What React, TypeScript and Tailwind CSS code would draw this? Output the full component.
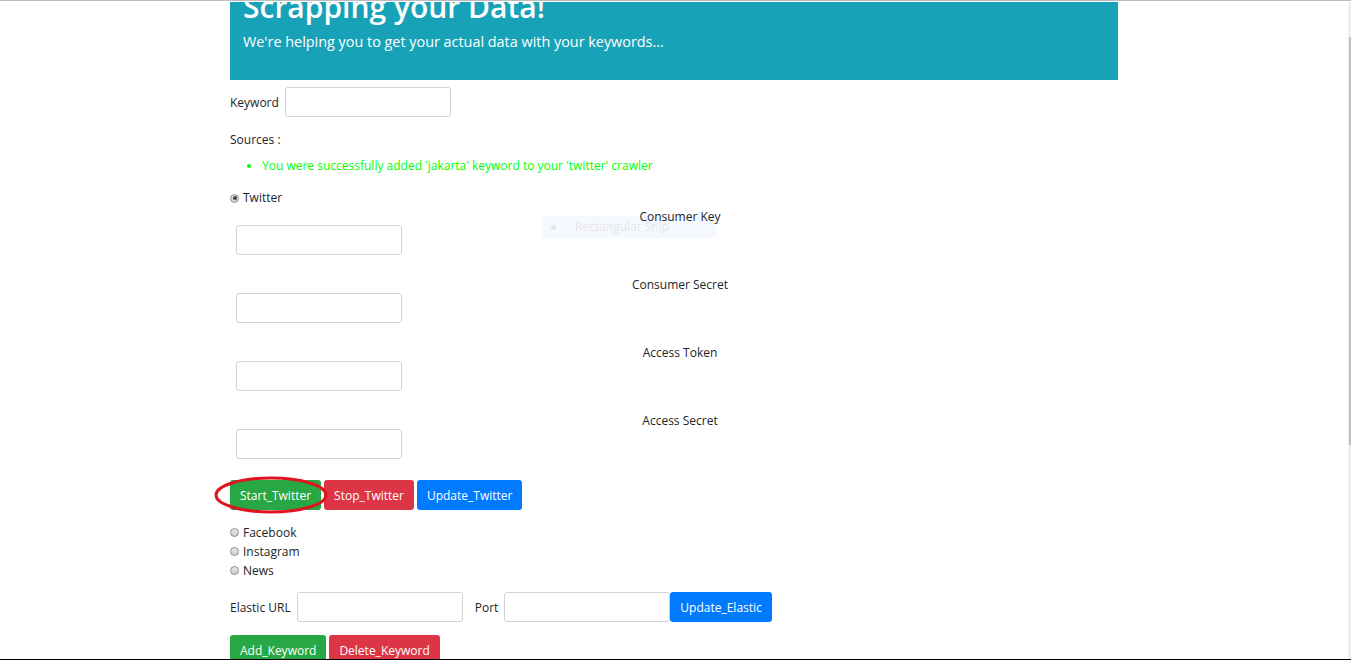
import React from "react";

const font = { fontFamily: '"Open Sans", "Noto Sans", sans-serif' };

const Radio = ({ checked = false }: { checked?: boolean }) => (
  <span className="inline-flex h-[9px] w-[9px] items-center justify-center rounded-full border border-[#8f8f8f] bg-gradient-to-b from-[#e6e6e6] to-[#cfcfcf]">
    {checked && <span className="h-[4px] w-[4px] rounded-full bg-[#444]" />}
  </span>
);

const Input = ({ className = "" }: { className?: string }) => (
  <input className={`h-[30px] w-[166px] rounded-[3px] border border-[#ced4da] bg-white ${className}`} />
);

const Btn = ({ label, color }: { label: string; color: "green" | "red" | "blue" }) => {
  const bg = color === "green" ? "bg-[#28a745]" : color === "red" ? "bg-[#dc3545]" : "bg-[#007bff]";
  return <button className={`h-[30px] rounded-[3px] px-[10px] pt-[2px] text-[12px] text-white ${bg}`}>{label}</button>;
};

const Field = ({ label }: { label: string }) => (
  <div>
    <div className="relative w-[900px] pt-[1px] text-center text-[12px] leading-[17px]">{label}</div>
    <Input className="ml-[6px]" />
  </div>
);

export default function App() {
  return (
    <div className="relative h-[660px] w-[1351px] overflow-hidden bg-white text-[#212529]" style={font}>
      {/* snip ghost overlay */}
      <div className="absolute left-[543px] top-[216px] flex h-[22px] w-[173px] items-center bg-[#f5f9ff] text-[12px] text-[#e6e6e6]">
        <span className="ml-[8px] h-[5px] w-[5px] rounded-full bg-[#e6e6e6]" />
        <span className="ml-[19px]">Rectangular Snip</span>
      </div>

      <div className="h-[2px] border-t border-[#bdbdbd]" />
      <div className="ml-[230px] w-[888px]">
        {/* jumbotron */}
        <div className="h-[78px] overflow-hidden bg-[#17a2b8] px-[13px] text-white">
          <h1 className="mt-[-11px] text-[30px] font-semibold leading-[32px]">Scrapping your Data!</h1>
          <p className="mt-[9px] text-[14.4px] leading-[20px]">We're helping you to get your actual data with your keywords...</p>
        </div>

        <div className="mt-[7px] flex items-center gap-[6px] text-[12px]">
          <span className="pt-[2px]">Keyword</span>
          <Input />
        </div>

        <div className="mt-[14px] text-[12px] leading-[18px]">Sources :</div>
        <ul className="mt-[8px] list-disc pl-[32px] text-[12px] leading-[18px] text-[#00ff00] marker:text-[#00ff00]">
          <li>You were successfully added 'jakarta' keyword to your 'twitter' crawler</li>
        </ul>

        <div className="mt-[14px] flex items-center gap-[4px] text-[12px] leading-[18px]">
          <Radio checked />
          <span>Twitter</span>
        </div>

        <div className="flex flex-col gap-[20px]">
          <Field label="Consumer Key" />
          <Field label="Consumer Secret" />
          <Field label="Access Token" />
          <Field label="Access Secret" />
        </div>

        <div className="relative mt-[21px] flex gap-[3px]">
          <Btn label="Start_Twitter" color="green" />
          <Btn label="Stop_Twitter" color="red" />
          <Btn label="Update_Twitter" color="blue" />
          <svg className="absolute left-[-17px] top-[-5px]" width="116" height="40" viewBox="0 0 116 40">
            <ellipse cx="58" cy="20" rx="55" ry="17" fill="none" stroke="#e0141e" strokeWidth="3" />
          </svg>
        </div>

        <div className="mt-[13px] flex flex-col text-[12px] leading-[19px]">
          {["Facebook", "Instagram", "News"].map((s) => (
            <div key={s} className="flex items-center gap-[4px]">
              <Radio />
              <span>{s}</span>
            </div>
          ))}
        </div>

        <div className="mt-[12px] flex items-center text-[12px]">
          <span className="pt-[2px]">Elastic URL</span>
          <Input className="ml-[6px]" />
          <span className="ml-[12px] pt-[2px]">Port</span>
          <Input className="ml-[6px]" />
          <Btn label="Update_Elastic" color="blue" />
        </div>

        <div className="mt-[13px] flex gap-[3px]">
          <Btn label="Add_Keyword" color="green" />
          <Btn label="Delete_Keyword" color="red" />
        </div>
      </div>

      {/* scrollbar */}
      <div className="absolute right-0 top-[2px] h-[657px] w-[3px] bg-[#f0f0f0]">
        <div className="ml-[1px] mt-[35px] h-[408px] w-[2px] bg-[#c1c1c1]" />
      </div>
      <div className="absolute bottom-0 left-0 h-[1px] w-full bg-black" />
    </div>
  );
}
